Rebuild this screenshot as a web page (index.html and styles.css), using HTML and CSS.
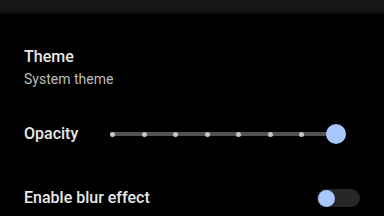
FILE: index.html
```html
<!DOCTYPE html>
<html lang="en">
<head>
    <meta charset="UTF-8">
    <meta name="viewport" content="width=device-width, initial-scale=1.0">
    <title>Settings</title>
    <link rel="stylesheet" href="styles.css">
</head>
<body>
    <div class="appbar"></div>
    <div class="list">
        <div class="item item-theme">
            <div class="item-title">Theme</div>
            <div class="item-summary">System theme</div>
        </div>
        <div class="item item-opacity">
            <div class="item-title">Opacity</div>
            <div class="slider">
                <div class="tick"></div>
                <div class="tick"></div>
                <div class="tick"></div>
                <div class="tick"></div>
                <div class="tick"></div>
                <div class="tick"></div>
                <div class="tick"></div>
                <div class="tick"></div>
                <div class="slider-thumb"></div>
            </div>
        </div>
        <div class="item item-blur">
            <div class="item-title">Enable blur effect</div>
            <div class="switch">
                <div class="switch-thumb"></div>
            </div>
        </div>
    </div>
</body>
</html>
```

FILE: styles.css
```css
body {
    margin: 0;
    background-color: #000;
    font-family: Roboto, "Noto Sans", sans-serif;
    width: 384px;
    height: 216px;
    overflow: hidden;
}
.appbar {
    height: 14px;
    background: linear-gradient(#161616 80%, #080808);
}
.list {
    padding: 0 24px;
}
.item {
    display: flex;
    align-items: center;
}
.item-theme {
    flex-direction: column;
    align-items: flex-start;
    padding-top: 31px;
}
.item-opacity {
    height: 48px;
    margin-top: 21px;
}
.item-blur {
    height: 48px;
    margin-top: 16px;
}
.item-title {
    font-size: 16px;
    line-height: 24px;
    font-weight: 500;
    color: #e8e8e8;
}
.item-summary {
    font-size: 14px;
    line-height: 20px;
    color: #bdbdbd;
}
.slider {
    position: relative;
    width: 226px;
    height: 4px;
    margin-left: auto;
    margin-right: 24px;
    border-radius: 2px;
    background-color: #525252;
    display: flex;
    justify-content: space-between;
    align-items: center;
}
.tick {
    width: 5px;
    height: 5px;
    border-radius: 50%;
    background-color: #c6c6c6;
}
.slider-thumb {
    position: absolute;
    right: -10px;
    top: -8px;
    width: 20px;
    height: 20px;
    border-radius: 50%;
    background-color: #a8c7fa;
}
.switch {
    width: 43px;
    height: 18px;
    margin-left: auto;
    border-radius: 9px;
    background-color: #272727;
    display: flex;
    align-items: center;
}
.switch-thumb {
    width: 17px;
    height: 17px;
    margin-left: 1px;
    border-radius: 50%;
    background-color: #a8c7fa;
}
```
